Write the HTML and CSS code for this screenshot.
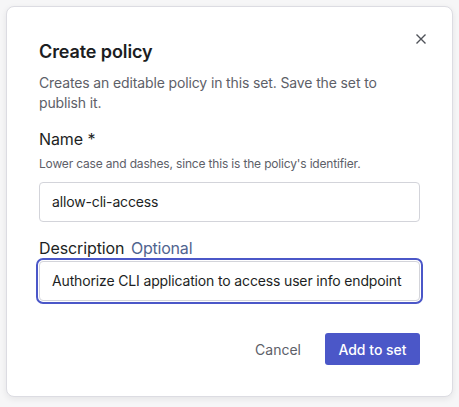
FILE: index.html
```html
<!DOCTYPE html>
<html lang="en">
<head>
<meta charset="utf-8">
<title>Create policy</title>
<link rel="stylesheet" href="styles.css">
</head>
<body>
<div class="dialog" role="dialog" aria-labelledby="dlg-title">
  <button class="close" aria-label="Close">
    <svg width="10" height="10" viewBox="0 0 10 10"><path d="M0.5 0.5 L9.5 9.5 M9.5 0.5 L0.5 9.5" stroke="#4f5259" stroke-width="1.4" fill="none"/></svg>
  </button>
  <h2 class="title" id="dlg-title">Create policy</h2>
  <p class="lead">Creates an editable policy in this set. Save the set to publish it.</p>
  <div class="field">
    <label class="label">Name *</label>
    <div class="hint">Lower case and dashes, since this is the policy's identifier.</div>
    <div class="input">allow-cli-access</div>
  </div>
  <div class="field field-desc">
    <label class="label">Description <span class="optional">Optional</span></label>
    <div class="input focused">Authorize CLI application to access user info endpoint</div>
  </div>
  <div class="actions">
    <button class="btn-cancel">Cancel</button>
    <button class="btn-primary">Add to set</button>
  </div>
</div>
</body>
</html>
```
FILE: styles.css
```css
* { box-sizing: border-box; }
html, body { margin: 0; padding: 0; }
body {
  width: 459px;
  height: 407px;
  background: #f6f6f7;
  font-family: Inter, "Noto Sans", sans-serif;
  color: #1d1f24;
  padding: 6px 6px 0 6px;
}
.dialog {
  position: relative;
  width: 447px;
  height: 391px;
  background: #ffffff;
  border: 1px solid #dcdce2;
  border-radius: 8px;
  box-shadow: 0 2px 6px rgba(20, 20, 40, 0.08);
  padding: 32px 32px 31px 32px;
  display: flex;
  flex-direction: column;
}
.close {
  position: absolute;
  top: 24px;
  right: 23px;
  width: 16px;
  height: 16px;
  padding: 3px;
  border: 0;
  background: transparent;
  display: flex;
  align-items: center;
  justify-content: center;
}
.title {
  margin: 0;
  font-size: 18px;
  line-height: 26px;
  font-weight: 600;
  color: #1b1d22;
  letter-spacing: -0.1px;
}
.lead {
  margin: 8px 0 0 0;
  font-size: 14px;
  line-height: 20px;
  color: #5d6068;
  letter-spacing: -0.13px;
}
.field { margin-top: 16px; display: flex; flex-direction: column; }
.field-desc { margin-top: 16px; }
.label {
  font-size: 16px;
  line-height: 20px;
  color: #1d1f24;
  letter-spacing: -0.1px;
}
.optional { color: #50648f; margin-left: 2px; letter-spacing: -0.2px; }
.hint {
  margin-top: 7px;
  font-size: 12px;
  line-height: 16px;
  color: #5d6068;
  letter-spacing: -0.17px;
}
.input {
  margin-top: 10px;
  height: 40px;
  border: 1px solid #d3d4da;
  border-radius: 4px;
  padding: 0 12px;
  font-size: 14px;
  line-height: 38px;
  color: #1d1f24;
  white-space: nowrap;
  overflow: hidden;
  letter-spacing: -0.15px;
}
.field-desc .input { margin-top: 3px; }
.input.focused {
  outline: 2px solid #4b57c8;
  outline-offset: 1px;
}
.actions {
  margin-top: auto;
  display: flex;
  justify-content: flex-end;
  align-items: center;
  gap: 24px;
}
.btn-cancel {
  border: 0;
  background: transparent;
  font-family: inherit;
  font-size: 14px;
  color: #5d6068;
  padding: 0;
}
.btn-primary {
  width: 95px;
  height: 32px;
  border: 0;
  border-radius: 3px;
  background: #4b57c8;
  color: #ffffff;
  font-family: inherit;
  font-size: 14px;
  font-weight: 500;
}
```
